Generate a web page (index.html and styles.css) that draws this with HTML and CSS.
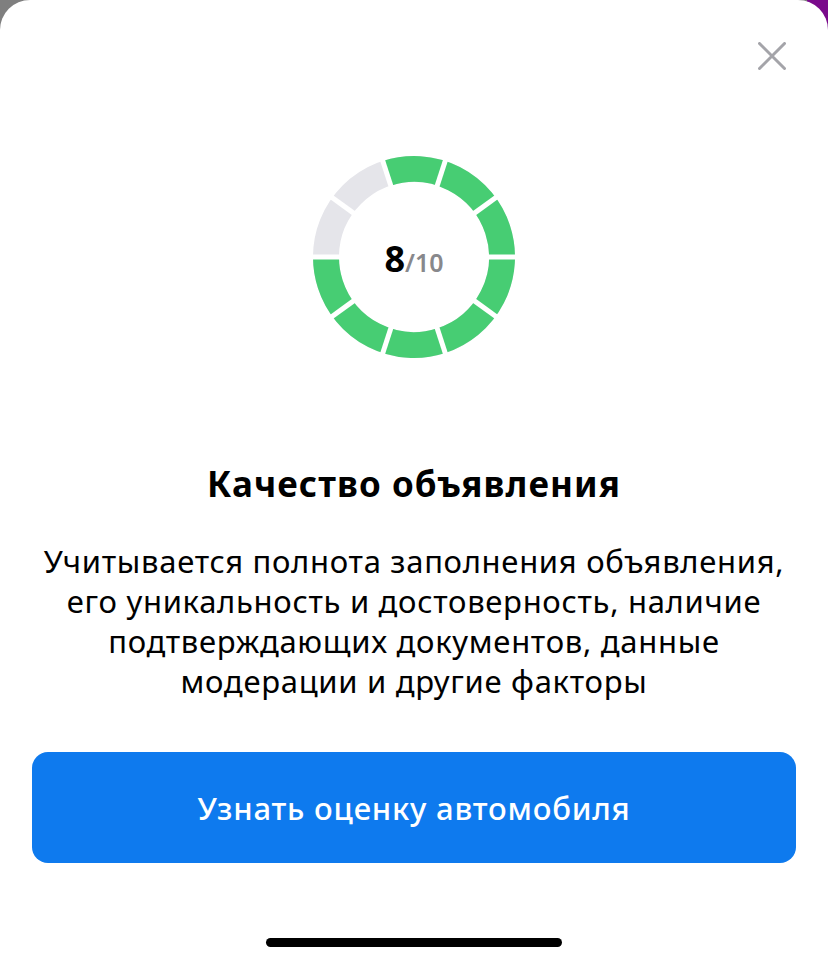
FILE: index.html
```html
<!DOCTYPE html>
<html lang="ru">
<head>
<meta charset="utf-8">
<title>Качество объявления</title>
<link rel="stylesheet" href="styles.css">
</head>
<body>
<div class="sheet">
  <button class="close" aria-label="Закрыть">
    <svg width="28" height="28" viewBox="0 0 28 28"><path d="M1.5 1.5 L26.5 26.5 M26.5 1.5 L1.5 26.5" stroke="#a4a4a9" stroke-width="3" stroke-linecap="round" fill="none"/></svg>
  </button>
  <div class="score">
    <svg class="ring" width="210" height="210" viewBox="0 0 210 210">
      <g transform="translate(105 105)">
        <circle r="88" fill="none" stroke="#e5e5ea" stroke-width="26"/>
        <circle r="88" fill="none" stroke="#47cd73" stroke-width="26" stroke-dasharray="442.34 600" transform="rotate(-108)"/>
        <g stroke="#fff" stroke-width="5">
          <line x1="0" y1="-70" x2="0" y2="-106" transform="rotate(-18)"/>
          <line x1="0" y1="-70" x2="0" y2="-106" transform="rotate(18)"/>
          <line x1="0" y1="-70" x2="0" y2="-106" transform="rotate(54)"/>
          <line x1="0" y1="-70" x2="0" y2="-106" transform="rotate(90)"/>
          <line x1="0" y1="-70" x2="0" y2="-106" transform="rotate(126)"/>
          <line x1="0" y1="-70" x2="0" y2="-106" transform="rotate(162)"/>
          <line x1="0" y1="-70" x2="0" y2="-106" transform="rotate(198)"/>
          <line x1="0" y1="-70" x2="0" y2="-106" transform="rotate(234)"/>
          <line x1="0" y1="-70" x2="0" y2="-106" transform="rotate(270)"/>
          <line x1="0" y1="-70" x2="0" y2="-106" transform="rotate(306)"/>
        </g>
      </g>
    </svg>
    <div class="value"><span class="num">8</span><span class="den">/10</span></div>
  </div>
  <h1 class="title">Качество объявления</h1>
  <p class="desc">Учитывается полнота заполнения объявления,<br>его уникальность и достоверность, наличие<br>подтверждающих документов, данные<br>модерации и другие факторы</p>
  <button class="cta">Узнать оценку автомобиля</button>
  <div class="home"></div>
</div>
</body>
</html>
```
FILE: styles.css
```css
html, body {
  margin: 0;
  padding: 0;
}
body {
  width: 828px;
  height: 964px;
  overflow: hidden;
  background: linear-gradient(to right, #7f7f7f 0, #7f7f7f 97.5%, #7a0a8b 97.5%);
  font-family: "Noto Sans", "Open Sans", sans-serif;
}
.sheet {
  height: 964px;
  background: #fff;
  border-radius: 30px 30px 0 0;
  display: flex;
  flex-direction: column;
  align-items: center;
}
.close {
  align-self: flex-end;
  margin: 42px 42px 0 0;
  width: 28px;
  height: 28px;
  padding: 0;
  border: 0;
  background: none;
  display: flex;
}
.score {
  margin-top: 82px;
  width: 210px;
  height: 210px;
  display: grid;
  place-items: center;
}
.ring {
  grid-area: 1 / 1;
}
.value {
  grid-area: 1 / 1;
  display: flex;
  align-items: baseline;
  margin-top: 2px;
}
.num {
  font-size: 36px;
  font-weight: 700;
  color: #000;
}
.den {
  font-size: 25px;
  font-weight: 600;
  color: #88888c;
}
.title {
  margin: 100px 0 0;
  font-size: 35px;
  line-height: 44px;
  letter-spacing: 1.1px;
  font-weight: 700;
  color: #000;
}
.desc {
  margin: 35px 0 0;
  width: 790px;
  text-align: center;
  font-size: 31px;
  line-height: 40px;
  letter-spacing: 0.7px;
  color: #000;
}
.cta {
  margin-top: 51px;
  width: 764px;
  height: 111px;
  border: 0;
  border-radius: 16px;
  background: #0e7aee;
  color: #fff;
  font-family: inherit;
  font-size: 31px;
  letter-spacing: 0.8px;
  font-weight: 500;
}
.home {
  margin-top: 75px;
  width: 296px;
  height: 9px;
  border-radius: 5px;
  background: #000;
}
```
